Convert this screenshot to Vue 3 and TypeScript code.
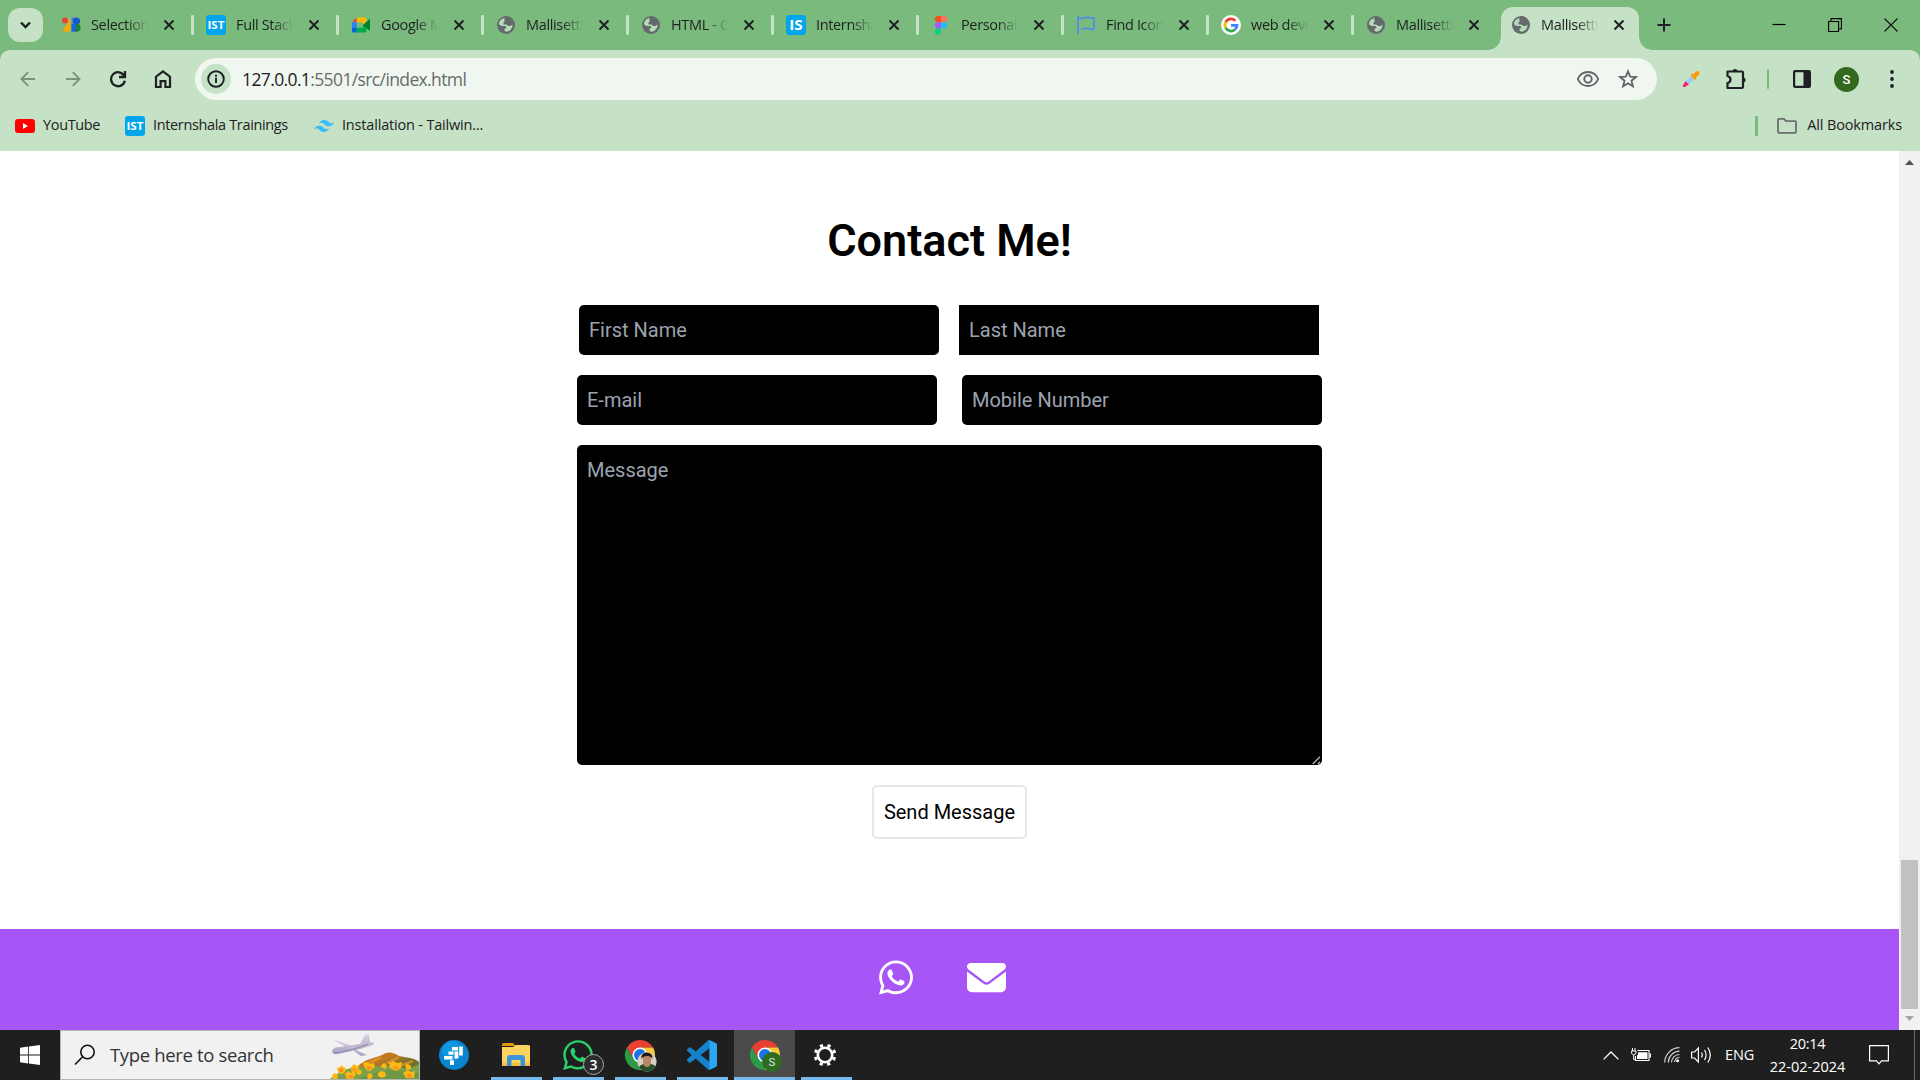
<script setup lang="ts">
interface Tab { icon: string; title: string; active?: boolean }

const tabs: Tab[] = [
  { icon: 'selection', title: 'Selection' },
  { icon: 'ist', title: 'Full Stack' },
  { icon: 'meet', title: 'Google Meet' },
  { icon: 'globe', title: 'Mallisetti' },
  { icon: 'globe', title: 'HTML - Clip' },
  { icon: 'is', title: 'Internshala' },
  { icon: 'figma', title: 'Personal' },
  { icon: 'flag', title: 'Find Icons' },
  { icon: 'google', title: 'web devel' },
  { icon: 'globe', title: 'Mallisetti' },
  { icon: 'globe', title: 'Mallisetti', active: true },
]
</script>

<template>
  <svg class="sprite" width="0" height="0">
    <symbol id="selection" viewBox="0 0 20 20">
      <path d="M9.500 2.500V16.500H1.500z" fill="#f9ab00" /><circle cx="4" cy="5.500" r="3" fill="#ea4335" />
      <rect x="10.500" y="2.500" width="4.500" height="14" fill="#4285f4" /><circle cx="15.500" cy="6" r="3.600" fill="#185abc" />
      <circle cx="15.500" cy="12.700" r="4" fill="#188038" /><path d="M10.500 9h4.500v7.500h-4.500z" fill="#1967d2" />
    </symbol>
    <symbol id="ist" viewBox="0 0 20 20">
      <rect width="20" height="20" rx="3" fill="#00a5ec" />
      <text x="10" y="14" text-anchor="middle" font-family="Open Sans, sans-serif" font-weight="700" font-size="11" textLength="17" lengthAdjust="spacingAndGlyphs" fill="#fff">IST</text>
    </symbol>
    <symbol id="is" viewBox="0 0 20 20">
      <rect width="20" height="20" rx="3" fill="#00a5ec" />
      <text x="10" y="15.300" text-anchor="middle" font-family="Open Sans, sans-serif" font-weight="700" font-size="14.500" textLength="13.500" lengthAdjust="spacingAndGlyphs" fill="#fff">IS</text>
    </symbol>
    <symbol id="meet" viewBox="0 0 20 20">
      <path d="M1 7.300 5.800 2.500V7.300z" fill="#ea4335" /><path d="M5.800 2.500H14q1.500 0 1.500 1.500v5l-3.500 2V7.300H5.800z" fill="#fbbc04" />
      <path d="M1 7.300h4.800v5.400H1z" fill="#2684fc" /><path d="M1 12.700h4.800v4.800H2.500Q1 17.500 1 16z" fill="#0066da" />
      <path d="M5.800 12.700H12V9.500l3.500 2V16q0 1.500-1.500 1.500H5.800z" fill="#00ac47" /><path d="M12 10l6-5.500q1-.5 1 .5v10q0 1-1 .5z" fill="#00832d" />
    </symbol>
    <symbol id="globe" viewBox="0 0 20 20">
      <circle cx="10" cy="10" r="9" fill="#646a6c" />
      <path class="land" d="M3 9.500C3 6 5.500 3.300 9 3L8 4.700 9 6 7.500 7.500v2h2.700l2 1.500h2.300l2-1.500c.2 4-2.700 7.200-6.500 7.300l-1.500-1.200v-1.500l2-1.500-1-1.600H5.800z" />
    </symbol>
    <symbol id="figma" viewBox="0 0 20 20">
      <path d="M10 1H7a3.100 3.100 0 0 0 0 6.200h3z" fill="#f24e1e" /><path d="M10 1h3a3.100 3.100 0 0 1 0 6.200h-3z" fill="#ff7262" />
      <path d="M10 7.200H7a3.100 3.100 0 0 0 0 6.200h3z" fill="#a259ff" /><circle cx="13" cy="10.300" r="3.100" fill="#1abcfe" />
      <path d="M10 13.400H7a3.100 3.100 0 1 0 3 3.100z" fill="#0acf83" />
    </symbol>
    <symbol id="flag" viewBox="0 0 20 20">
      <path d="M2 18.300V1.800M2.500 3c3.200 1.500 5.800-.8 8.800-.8S15.500 4 18 3v11c-2.700 1.200-4.500-.2-6.500-.7-2-.5-3.500.3-5.200.7" fill="none" stroke="#5290e2" stroke-width="2" stroke-linecap="round" stroke-linejoin="round" />
    </symbol>
    <symbol id="google" viewBox="0 0 20 20">
      <circle cx="10" cy="10" r="10" fill="#fff" />
      <g fill="none" stroke-width="2.800"><path d="M14.300 5.700A6 6 0 0 0 4.700 7.200" stroke="#ea4335" /><path d="M4.700 7.200a6 6 0 0 0 0 5.600" stroke="#fbbc04" /><path d="M4.700 12.800a6 6 0 0 0 9.300 1.700" stroke="#34a853" /><path d="M14 14.500a6 6 0 0 0 2-4.100h-6" stroke="#4285f4" /></g>
    </symbol>
    <symbol id="chrome" viewBox="0 0 48 48">
      <path d="M4.950 13A22 22 0 0 1 43.050 13H24L14.470 29.500z" fill="#e94033" />
      <path d="M4.950 13A22 22 0 0 0 24 46l9.530-16.500H14.470z" fill="#2d9a48" />
      <path d="M43.050 13A22 22 0 0 1 24 46l9.530-16.500L24 13z" fill="#fcc934" />
      <circle cx="24" cy="24" r="11" fill="#fff" /><circle cx="24" cy="24" r="8.700" fill="#1a73e8" />
    </symbol>
    <symbol id="whatsapp" viewBox="0 0 448 512">
      <path d="M380.900 97.100C339 55.100 283.200 32 223.900 32c-122.400 0-222 99.600-222 222 0 39.100 10.200 77.300 29.600 111L0 480l117.700-30.900c32.400 17.700 68.900 27 106.100 27h.1c122.300 0 224.100-99.600 224.100-222 0-59.300-25.200-115-67.100-157zm-157 341.600c-33.200 0-65.700-8.900-94-25.700l-6.700-4-69.800 18.300L72 359.200l-4.400-7c-18.500-29.400-28.200-63.300-28.200-98.200 0-101.700 82.800-184.500 184.600-184.500 49.300 0 95.600 19.200 130.400 54.100 34.800 34.900 56.200 81.200 56.100 130.500 0 101.800-84.900 184.600-186.600 184.600zm101.200-138.200c-5.500-2.800-32.800-16.200-37.900-18-5.100-1.900-8.800-2.800-12.500 2.800-3.700 5.600-14.300 18-17.600 21.800-3.200 3.700-6.500 4.200-12 1.400-32.600-16.300-54-29.100-75.500-66-5.700-9.800 5.700-9.100 16.300-30.300 1.800-3.700.9-6.900-.5-9.700-1.400-2.800-12.500-30.100-17.100-41.200-4.500-10.800-9.100-9.300-12.500-9.500-3.200-.2-6.900-.2-10.600-.2-3.700 0-9.700 1.400-14.800 6.900-5.100 5.600-19.400 19-19.400 46.300 0 27.300 19.900 53.700 22.600 57.400 2.800 3.700 39.100 59.700 94.800 83.800 35.200 15.200 49 16.500 66.600 13.900 10.700-1.600 32.800-13.400 37.400-26.400 4.600-13 4.600-24.100 3.200-26.400-1.300-2.500-5-3.900-10.500-6.600z" fill="currentColor" />
    </symbol>
  </svg>

  <div class="screen">
    <header class="tabstrip">
      <button class="tab-search"><svg width="35" height="34" viewBox="0 0 35 34"><path d="M13 14.500l4.500 4.500 4.500-4.500" fill="none" stroke="#1f2023" stroke-width="2.400" /></svg></button>
      <div class="tabs">
        <div v-for="(tab, i) in tabs" :key="i" class="tab" :class="{ active: tab.active, plain: i > 8 }">
          <svg class="favicon" width="20" height="20"><use :href="'#' + tab.icon" /></svg>
          <span class="title">{{ tab.title }}</span>
          <svg class="close" width="12" height="12" viewBox="0 0 12 12"><path d="M1.500 1.500l9 9M10.500 1.500l-9 9" stroke="#1f2023" stroke-width="2" /></svg>
        </div>
      </div>
      <svg class="plus" width="14" height="14" viewBox="0 0 14 14"><path d="M7 .5v13M.5 7h13" stroke="#1f2023" stroke-width="2" /></svg>
      <div class="window-buttons">
        <svg width="14" height="14" viewBox="0 0 14 14"><path d="M.5 6.500h13" stroke="#000" stroke-width="1.200" /></svg>
        <svg width="14" height="14" viewBox="0 0 14 14" fill="none" stroke="#000" stroke-width="1.100"><path d="M.6 3.500h10v10H.6zM3 3.500V.6h10.400V11h-2.800" /></svg>
        <svg width="14" height="14" viewBox="0 0 14 14"><path d="M.5.500l13 13M13.500.500l-13 13" stroke="#111" stroke-width="1.100" /></svg>
      </div>
    </header>

    <div class="chrome-body">
      <div class="toolbar">
        <span class="cell"><svg width="16" height="16" viewBox="0 0 16 16"><path d="M15 8H2M8.200 1.200L1.500 8l6.700 6.800" fill="none" stroke="#7e917f" stroke-width="1.900" /></svg></span>
        <span class="cell"><svg width="16" height="16" viewBox="0 0 16 16"><path d="M1 8h13M7.800 1.200L14.500 8l-6.700 6.800" fill="none" stroke="#7e917f" stroke-width="1.900" /></svg></span>
        <span class="cell"><svg width="18" height="18" viewBox="0 0 18 18"><path d="M15.200 5.800A7 7 0 1 0 15.900 10.800M16 1v6h-6" fill="none" stroke="#1f2023" stroke-width="2.300" /></svg></span>
        <span class="cell"><svg width="18" height="20" viewBox="0 0 18 20"><path d="M2 18V7.700L9 2.400l7 5.300V18h-4.600v-5.800H6.600V18z" fill="none" stroke="#1f2023" stroke-width="2.200" /></svg></span>
        <div class="omnibox">
          <span class="site-info"><svg width="18" height="18" viewBox="0 0 18 18"><circle cx="9" cy="9" r="7.800" fill="none" stroke="#1f2023" stroke-width="1.900" /><path d="M9 7.700v5.300M9 4.700v2" stroke="#1f2023" stroke-width="1.900" /></svg></span>
          <span class="url"><b>127.0.0.1</b>:5501/src/index.html</span>
          <svg class="eye" width="24" height="18" viewBox="0 0 24 18" fill="none" stroke="#5f6566" stroke-width="1.900"><path d="M1.800 9C3.600 4.800 7.400 2 12 2s8.400 2.800 10.200 7c-1.800 4.200-5.600 7-10.200 7S3.600 13.200 1.800 9z" /><circle cx="12" cy="9" r="3.700" /></svg>
          <svg class="star" width="20" height="20" viewBox="0 0 20 20"><path d="M10 2.300l2.200 5.300 5.700.4-4.400 3.700 1.400 5.600L10 14.300l-4.900 3 1.400-5.600L2.100 8l5.700-.4z" fill="none" stroke="#5f6566" stroke-width="1.800" /></svg>
        </div>
        <span class="cell pipette"><svg width="18" height="18" viewBox="0 0 18 18"><path d="M10 5.500l3 3-6.500 6.200-3.200-3z" fill="#9ccaf3" /><path d="M3.600 11.200l3.300 3.300-4 2.500L.8 17l.3-2.200z" fill="#f91e6b" /><path d="M8.500 4.800L10 3.700l1.300.8 2.800-3Q16 .3 17 1.500t0 3L14 7.500l.5 1.300-1.400 1.200z" fill="#ff9800" /></svg></span>
        <span class="cell"><svg width="22" height="22" viewBox="0 0 22 22"><path d="M2.500 3.500H17q1 0 1 1V19q0 1-1 1H2.500v-5c4-1 4-6 0-7z" fill="none" stroke="#1f2023" stroke-width="2.200" stroke-linejoin="round" /><path d="M7.500 3.500a2.500 2.500 0 0 1 5 0zM18 9.500a2.500 2.500 0 0 1 0 5z" fill="#1f2023" /></svg></span>
        <i class="bar" />
        <span class="cell"><svg width="18" height="18" viewBox="0 0 18 18"><rect x="1.100" y="1.100" width="15.800" height="15.800" rx="1" fill="none" stroke="#1f2023" stroke-width="2.200" /><path d="M10.500 1h6v16h-6z" fill="#1f2023" /></svg></span>
        <span class="cell"><span class="avatar">S</span></span>
        <span class="cell"><svg width="6" height="20" viewBox="0 0 6 20" fill="#1f2023"><circle cx="3" cy="3" r="1.900" /><circle cx="3" cy="10" r="1.900" /><circle cx="3" cy="17" r="1.900" /></svg></span>
      </div>
      <div class="bookmarks">
        <svg width="20" height="14" viewBox="0 0 20 14"><rect width="20" height="14" rx="3" fill="#f00" /><path d="M8 4l5 3-5 3z" fill="#fff" /></svg>
        <span class="bm-text yt">YouTube</span>
        <svg width="20" height="20"><use href="#ist" /></svg>
        <span class="bm-text it">Internshala Trainings</span>
        <svg width="20" height="12" viewBox="0 0 20 12" fill="#38bdf8"><path d="M5 4Q6.300 0 10.200 0c4 0 4.500 2.900 6.500 3.400Q18.600 3.700 20 2q-1.300 4.300-5 4.300c-4 0-4.500-2.900-6.500-3.400Q6.500 2.400 5 4z" /><path d="M0 9.700q1.300-4 5.200-4c4 0 4.500 2.900 6.500 3.400 1.900.3 3.300-1.400 3.300-1.400-1.300 4.300-5 4.300-5 4.300-4 0-4.500-2.900-6.500-3.400Q1.500 8.100 0 9.700z" /></svg>
        <span class="bm-text tw">Installation - Tailwin...</span>
        <i class="bar all" />
        <svg width="20" height="16" viewBox="0 0 20 16"><path d="M1 13.500v-12q0-.6.800-.6H7L9 3.200h9q1 0 1 1v9.500q0 1.200-1 1.200H2.200Q1 14.900 1 13.500z" fill="none" stroke="#6a706d" stroke-width="1.800" /></svg>
        <span class="bm-text ab">All Bookmarks</span>
      </div>
    </div>

    <div class="viewport">
      <div class="page">
        <main>
          <h1>Contact Me!</h1>
          <form @submit.prevent>
            <div class="row narrow">
              <input placeholder="First Name" />
              <input class="square" placeholder="Last Name" />
            </div>
            <div class="row wide">
              <input placeholder="E-mail" />
              <input placeholder="Mobile Number" />
            </div>
            <div class="message">
              <textarea placeholder="Message"></textarea>
              <svg class="grip" width="10" height="10" viewBox="0 0 10 10"><path d="M.8 9L8 1.800M5.800 9L8 6.800" stroke="#b5b5b5" stroke-width="1.300" /></svg>
            </div>
            <button class="send">Send Message</button>
          </form>
        </main>
        <footer>
          <svg width="34" height="39"><use href="#whatsapp" /></svg>
          <svg width="39" height="39" viewBox="0 0 512 512" fill="#fff"><path d="M48 64C21.500 64 0 85.500 0 112c0 15.100 7.100 29.300 19.200 38.400L236.800 313.600c11.400 8.500 27 8.500 38.400 0L492.800 150.400c12.100-9.100 19.200-23.300 19.200-38.400c0-26.500-21.500-48-48-48H48zM0 176V384c0 35.300 28.700 64 64 64H448c35.300 0 64-28.700 64-64V176L294.400 339.200c-22.800 17.100-54 17.100-76.800 0L0 176z" /></svg>
        </footer>
      </div>
      <div class="scrollbar">
        <svg width="9" height="5" viewBox="0 0 9 5"><path d="M0 5L4.500 0 9 5z" fill="#505050" /></svg>
        <i class="thumb" />
        <svg width="9" height="5" viewBox="0 0 9 5"><path d="M0 0l4.500 5L9 0z" fill="#a3a3a3" /></svg>
      </div>
    </div>

    <div class="taskbar">
      <span class="start"><svg width="20" height="20" viewBox="0 0 20 20" fill="#fff"><path d="M0 2.700L8.200 1.500v8H0zM9 1.400L20 0v9.500H9zM0 10.400h8.200v8L0 17.300zM9 10.400h11V20L9 18.500z" /></svg></span>
      <div class="search">
        <svg width="22" height="22" viewBox="0 0 22 22" fill="none" stroke="#111" stroke-width="1.600"><circle cx="13.500" cy="8" r="6.700" /><path d="M8.700 12.800L1 20.500" /></svg>
        <span>Type here to search</span>
        <svg class="art" width="90" height="48" viewBox="0 0 90 48">
          <defs>
            <linearGradient id="hill" x1="0" y1="0" x2="1" y2="1"><stop offset="0" stop-color="#a77b20" /><stop offset=".35" stop-color="#c9791f" /><stop offset=".6" stop-color="#76702a" /><stop offset="1" stop-color="#6c7d35" /></linearGradient>
            <linearGradient id="wing" x1="0" y1="0" x2="0" y2="1"><stop offset="0" stop-color="#ddd0e0" /><stop offset="1" stop-color="#a9a3c4" /></linearGradient>
          </defs>
          <path d="M28 36C37 27 44 28 53 24c6-4 11-3 17 1l11 2q6 1 9 4v17H20z" fill="url(#hill)" />
          <path d="M52 26c-8 5-13 5-17 9M70 26c-5 2-8 5-12 6M84 30c-4 2-8 2-12 5" stroke="#e69a2c" stroke-width="2.500" fill="none" opacity=".7" />
          <path d="M1 48c12-9 22-13 35-12 14-1 22-2 34 0 8 2 14 1 20-3v15z" fill="#7da04a" />
          <path d="M30 48c14-9 36-10 60-6v6z" fill="#6d9845" />
          <g fill="url(#wing)" transform="translate(1 2)"><path d="M2 18q1-4 8-4l20-3 5-9 4-1 1 8 4 1-1 2-13 4-22 5Q2 22 2 18z" /><path d="M2 6l26 9-6 2zM17 13l20 9-6 1z" /></g>
          <path d="M5 22q14-1 34-9" stroke="#8f86b2" stroke-width="1" fill="none" />
          <g fill="#fdb913">
            <path d="M8 36l2 1 3-3 2 3 2-1-1 5q-4 4-7 0z" /><path d="M3 44l3-2 3 2-1 4H4z" /><path d="M16 43l3-3 3 2 3-2 2 3-3 5h-6z" /><path d="M22 36l3-3 3 2 2-1-1 6q-4 3-7 0z" /><path d="M28 38l4 1 1 3-3 2-3-2z" />
            <path d="M34 32l4-1 3 2 4-1 1 4-5 4q-5 0-7-8z" /><path d="M38 44l3-2 3 2-2 4h-3zM49 42l3-2 4 1 1 4-4 2-4-2zM53 33l3-1 2 3-2 3-4-2z" /><path d="M60 32l4-2 4 2 5-1-1 6-5 3-6-3z" /><path d="M76 34l3-1 3 2 0 3-4 1zM74 42l4-3 4 2 4-1-1 7h-8z" />
          </g>
          <g fill="#f7941d"><path d="M9 38l4-1 2 2-3 3zM18 45l4-1 3 1-3 3zM36 36l4-1 3 2-3 2zM63 36l4-1 3 1-3 3zM77 44l4-1 3 2-4 3zM23 38l3-1 2 2-3 2z" /></g>
        </svg>
      </div>
      <div class="apps">
        <span class="app none"><svg width="30" height="30" viewBox="0 0 30 30"><circle cx="15" cy="15" r="15" fill="#0a84d0" /><circle cx="13" cy="11" r="10" fill="#17a5ee" opacity=".55" /><g fill="#fff"><path d="M13 7h6v3.600h-6zM20.200 6.500h3.600v9h-3.600zM9.500 11.500h5v3.300h-5zM15.500 11.500h3.800v7h-3.800zM5 16h8.500v3.500H5zM11 20.200h4V25h-4z" /></g></svg></span>
        <span class="app"><svg width="28" height="24" viewBox="0 0 28 24"><path d="M0 2Q0 0 1.500 0h9.500l2.500 3H0z" fill="#e09b00" /><path d="M0 4h11l3-2h12.500q1.500 0 1.500 1.500V23H0z" fill="#ffd45e" /><path d="M0 20h28v3H0z" fill="#f4bd3d" /><path d="M5 23v-8q0-3 3-3h12q3 0 3 3v8h-4.500v-6h-9v6z" fill="#3b94d9" /></svg></span>
        <span class="app wa"><svg width="32" height="34"><use href="#whatsapp" /></svg><em>3</em></span>
        <span class="app"><svg width="34" height="34" viewBox="0 0 34 34"><svg x="0.500" y="0.500" width="33" height="33"><use href="#chrome" /></svg>
          <clipPath id="face"><circle cx="24" cy="23.800" r="9.700" /></clipPath><g clip-path="url(#face)"><path d="M13 13h22v22H13z" fill="#d8cfc0" /><path d="M14 35v-3q3-6 7-6l3 3 3-3q5 0 8 6v3z" fill="#25502d" /><path d="M20 18h8v7q-1 4-4 4t-4-4z" fill="#b98664" /><path d="M18.500 21q-1-6 5-6.500 6.500 0 6 6.500l-1.500-2q-4-2-8 0z" fill="#201916" /></g></svg></span>
        <span class="app"><svg width="30" height="30" viewBox="0 0 24 24"><path d="M23.150 2.587L18.210.210a1.494 1.494 0 0 0-1.705.290l-9.460 8.630-4.120-3.128a.999.999 0 0 0-1.276.057L.327 7.261A1 1 0 0 0 .326 8.740L3.899 12 .326 15.260a1 1 0 0 0 .001 1.479L1.650 17.940a.999.999 0 0 0 1.276.057l4.120-3.128 9.460 8.630a1.492 1.492 0 0 0 1.704.290l4.942-2.377A1.500 1.500 0 0 0 24 20.060V3.939a1.500 1.500 0 0 0-.850-1.352zm-5.146 14.861L10.826 12l7.178-5.448v10.896z" fill="#1382cb" /><path d="M18.004 0.200l5.146 2.387Q24 3 24 3.939V20.060q0 1-.850 1.350l-5.146 2.390z" fill="#2ba5f2" /></svg></span>
        <span class="app current"><svg width="34" height="34" viewBox="0 0 34 34"><svg x="0.500" y="0.500" width="33" height="33"><use href="#chrome" /></svg><circle cx="24" cy="23.800" r="9.900" fill="#2f6b22" /><text x="24" y="28" text-anchor="middle" font-family="Roboto, sans-serif" font-size="11.500" fill="#dfe9dc">S</text></svg></span>
        <span class="app gear"><svg width="24" height="24" viewBox="0 0 24 24" fill="none" stroke="#fff"><circle cx="12" cy="12" r="7.200" stroke-width="2.600" /><circle cx="12" cy="12" r="9.800" stroke-width="3" stroke-dasharray="3.200 4.497" stroke-dashoffset="-2.200" /></svg></span>
      </div>
      <div class="tray">
        <svg class="chev" width="16" height="9" viewBox="0 0 16 9"><path d="M.6 8.400L8 1l7.400 7.400" fill="none" stroke="#fff" stroke-width="1.300" /></svg>
        <svg class="battery" width="20" height="14" viewBox="0 0 20 14"><path d="M1.500 0v3M4 0v3M0 3h5v2.500L2.700 7 .5 5.500zM2.700 7v4.500H5" fill="none" stroke="#fff" stroke-width="1" /><path d="M6.500 2.500H18v10H4.500V8" fill="none" stroke="#fff" stroke-width="1.100" /><path d="M7 4.200h9.500V11H6V7.500l1-1zM18.500 5.500H20v4h-1.500z" fill="#fff" /></svg>
        <svg class="wifi" width="16" height="16" viewBox="0 0 16 16" fill="none" stroke="#d0d0d0" stroke-width="1.200"><path d="M.7 15.500A15 15 0 0 1 15.500.7M4.200 15.500A11.500 11.500 0 0 1 15.500 4.200M7.500 15.500a8 8 0 0 1 8-8M10.500 15a5 5 0 0 1 5-4.500" /><circle cx="13.600" cy="13.800" r="1.500" fill="#fff" stroke="none" /></svg>
        <svg class="volume" width="21" height="18" viewBox="0 0 21 18" fill="none" stroke="#fff" stroke-width="1.200"><path d="M.6 6H3.500L7.400 2v14l-3.900-4H.6z" /><path d="M10.500 6.500q1.500 2.500 0 5M13.500 4q3.200 5 0 10M16.800 1.500q5 7.500 0 15" /></svg>
        <span class="lang">ENG</span>
        <div class="clock"><span>20:14</span><span class="date">22-02-2024</span></div>
        <svg class="notify" width="20" height="20" viewBox="0 0 20 20"><path d="M.6.600h18.800v15.300H12.500L10 18.800l-2.500-2.900H.6z" fill="none" stroke="#fff" stroke-width="1.200" /></svg>
        <i class="peek" />
      </div>
    </div>
  </div>
</template>

<style>
html, body { margin: 0; overflow: hidden; }
</style>

<style scoped>
* { box-sizing: border-box; }
svg { display: block; flex: none; }
button { font: inherit; }
.sprite { display: none; }
.screen { width: 1920px; height: 1080px; display: flex; flex-direction: column; overflow: hidden; background: #7abb7d; font-family: "Open Sans", "Noto Sans", sans-serif; color: #1f2023; }

.tabstrip { height: 50px; flex: none; display: flex; align-items: center; padding-left: 8px; }
.tab-search { width: 35px; height: 34px; padding: 0; border: 0; border-radius: 12px; background: #c5e1c6; }
.tabs { display: flex; margin-left: 5px; height: 50px; }
.tab { position: relative; width: 145px; display: flex; align-items: center; padding-left: 13px; }
.tab::after { content: ""; width: 3px; height: 20px; margin-left: 16px; border-radius: 1px; background: #c5e1c6; flex: none; }
.tab.plain::after { visibility: hidden; }
.title { width: 58px; margin-left: 10px; flex: none; overflow: hidden; white-space: nowrap; font-size: 14.500px; letter-spacing: -0.350px; line-height: 22px; mask-image: linear-gradient(90deg, #000 62%, transparent 99%); }
.close { margin-left: 14px; }
.tab.active { z-index: 1; }
.tab.active::before { content: ""; position: absolute; z-index: -1; left: 3px; right: 4px; top: 7px; bottom: 0; border-radius: 12px 12px 0 0; background: #c5e1c6; }
.tab.active::after { visibility: visible; position: absolute; z-index: -1; left: -10px; right: -9px; bottom: 0; margin: 0; width: auto; height: 13px; border-radius: 0; background: radial-gradient(circle at 0 0, transparent 12.500px, #c5e1c6 13px) left / 13px 13px no-repeat, radial-gradient(circle at 100% 0, transparent 12.500px, #c5e1c6 13px) right / 13px 13px no-repeat; }
.land { fill: #b7dab9; }
.plus { margin-left: 14px; }
.window-buttons { display: flex; gap: 42px; margin-left: auto; margin-right: 22px; }

.chrome-body { height: 101px; flex: none; background: #c5e1c6; border-radius: 10px 10px 0 0; }
.toolbar { height: 58px; display: flex; align-items: center; padding-left: 5px; }
.cell { width: 45px; display: flex; justify-content: center; flex: none; }
.pipette { margin-left: 11px; }
.omnibox { width: 1462px; height: 42px; margin-left: 10px; border-radius: 21px; background: #f0f7f0; display: flex; align-items: center; flex: none; }
.site-info { width: 30px; height: 30px; margin-left: 6px; border-radius: 50%; background: #c5e1c6; display: flex; align-items: center; justify-content: center; }
.url { margin-left: 11px; font-size: 17.500px; letter-spacing: -0.620px; color: #666d6b; }
.url b { font-weight: 400; color: #1f2023; }
.eye { margin-left: auto; }
.star { margin: 0 19px 0 18px; }
.bar { width: 2px; height: 20px; margin: 0 10px 0 9px; background: #7abb7d; border-radius: 1px; flex: none; }
.avatar { width: 25px; height: 25px; border-radius: 50%; background: #33691e; color: #fff; font: 500 13px/25px Roboto, sans-serif; text-align: center; }
.bookmarks { height: 36px; display: flex; align-items: center; padding: 0 18px 0 15px; }
.bm-text { font-size: 14.500px; letter-spacing: -0.350px; margin-left: 8px; white-space: nowrap; line-height: 20px; padding-bottom: 2px; }
.yt { width: 82px; }
.it { width: 161px; }
.tw { letter-spacing: -0.180px; }
.bar.all { width: 3px; margin: 0 19px 0 auto; }
.bm-text.ab { margin-left: 10px; letter-spacing: -0.150px; }

.viewport { height: 879px; display: flex; flex: none; background: #fff; }
.page { width: 1899px; display: flex; flex-direction: column; font-family: Roboto, sans-serif; }
main { height: 778px; display: flex; flex-direction: column; align-items: center; color: #000; }
h1 { margin: 65px 0 0; font-size: 45px; line-height: 50px; font-weight: 600; letter-spacing: 0; }
form { width: 745px; margin-top: 39px; display: flex; flex-direction: column; align-items: center; gap: 20px; }
.row { display: flex; }
.narrow { gap: 20px; margin-right: 1px; }
.wide { gap: 25px; }
input, textarea { display: block; margin: 0; border: 0; outline: 0; background: #000; color: #fff; border-radius: 5px; font: 400 20px/30px Roboto, sans-serif; padding: 10px; }
input { width: 360px; height: 50px; }
.square { border-radius: 0; }
input::placeholder, textarea::placeholder { color: #9ca3af; opacity: 1; }
.message { position: relative; }
textarea { width: 745px; height: 320px; resize: none; }
.grip { position: absolute; right: 0; bottom: 0; }
.send { width: 155px; height: 54px; padding: 0; border: 2px solid #e5e7eb; border-radius: 5px; background: #fff; color: #000; font-size: 20px; white-space: nowrap; }
footer { height: 101px; background: #a855f7; color: #fff; display: flex; gap: 54px; padding: 29px 0 0 879px; }
.scrollbar { width: 21px; background: #f1f1f1; display: flex; flex-direction: column; align-items: center; padding: 9px 0; }
.thumb { width: 17px; height: 149px; margin: auto 0 7px; background: #c1c1c1; }

.taskbar { height: 50px; flex: none; display: flex; align-items: center; background: #1f1f1f; color: #fff; }
.start { width: 60px; display: flex; justify-content: center; }
.search { width: 360px; height: 50px; flex: none; border: 1px solid #b4b4b4; background: #f1f1f1; display: flex; align-items: center; padding-left: 13px; color: #333; font-size: 18.500px; letter-spacing: -0.350px; white-space: nowrap; }
.search span { margin-left: 14px; padding-bottom: 2px; }
.art { margin-left: auto; }
.apps { display: flex; height: 50px; margin-left: 3px; }
.app { position: relative; width: 62px; display: flex; align-items: center; justify-content: center; }
.app::after { content: ""; position: absolute; left: 6px; right: 5px; bottom: 0; height: 3px; background: #76b9ed; }
.app.none::after { display: none; }
.app.current { width: 61px; margin-left: 1px; background: #4b4b4b; }
.app.current::after { left: 0; right: 0; }
.app.gear { padding-right: 2px; }
.wa svg { color: #25d366; }
.wa em { position: absolute; left: 36px; top: 24px; width: 21px; height: 21px; border: 1px solid #aaa; border-radius: 50%; background: #2b2b2b; color: #fff; font: 600 14px/19px "Open Sans", sans-serif; text-align: center; }
.tray { margin-left: auto; display: flex; align-items: center; height: 50px; font-size: 14.500px; letter-spacing: -0.300px; }
.battery { margin-left: 12px; }
.wifi { margin-left: 13px; }
.volume { margin-left: 11px; }
.lang { width: 29px; margin-left: 13px; letter-spacing: -0.100px; padding-bottom: 1px; }
.clock { width: 91px; margin-left: 8px; padding-bottom: 1px; display: flex; flex-direction: column; align-items: center; line-height: 23px; }
.date { letter-spacing: -0.020px; }
.notify { margin-left: 16px; }
.peek { width: 1px; height: 50px; background: #6a6a6a; margin: 0 5px 0 25px; }
</style>
